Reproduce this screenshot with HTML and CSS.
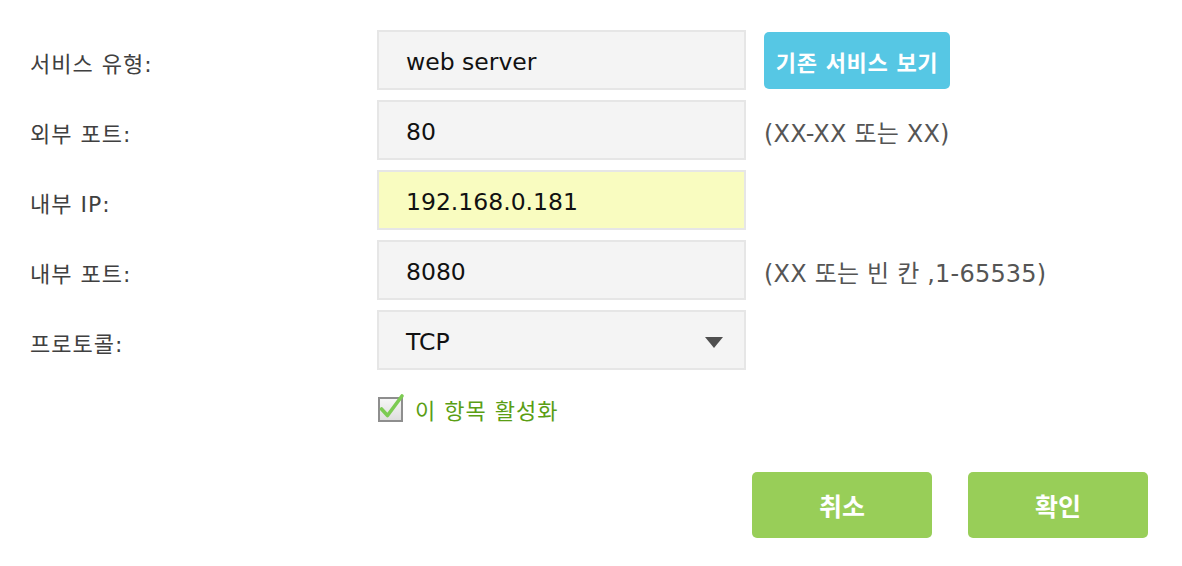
FILE: index.html
```html
<!DOCTYPE html>
<html lang="ko">
<head>
<meta charset="utf-8">
<link rel="stylesheet" href="styles.css">
</head>
<body>
<div class="form">
  <div class="row">
    <div class="label">서비스 유형:</div>
    <div class="field">web server</div>
    <button class="btn-blue">기존 서비스 보기</button>
  </div>
  <div class="row">
    <div class="label">외부 포트:</div>
    <div class="field">80</div>
    <div class="hint">(XX-XX 또는 XX)</div>
  </div>
  <div class="row">
    <div class="label">내부 IP:</div>
    <div class="field focus">192.168.0.181</div>
  </div>
  <div class="row">
    <div class="label">내부 포트:</div>
    <div class="field">8080</div>
    <div class="hint">(XX 또는 빈 칸 ,1-65535)</div>
  </div>
  <div class="row">
    <div class="label">프로토콜:</div>
    <div class="field select">TCP<span class="arrow"></span></div>
  </div>
  <div class="check-row">
    <span class="checkbox">
      <svg class="tick" width="30" height="30" viewBox="0 0 30 30"><path d="M6.5 17 L12.5 23.5 L27 4" fill="none" stroke="#7ccb52" stroke-width="3.6" stroke-linecap="round" stroke-linejoin="round"/></svg>
    </span>
    <span class="check-label">이 항목 활성화</span>
  </div>
  <div class="actions">
    <button class="btn-green">취소</button>
    <button class="btn-green">확인</button>
  </div>
</div>
</body>
</html>
```
FILE: styles.css
```css
html, body {
  margin: 0;
  padding: 0;
  background: #ffffff;
}
body {
  font-family: "DejaVu Sans", "Noto Sans CJK KR", sans-serif;
  color: #333333;
}
.form {
  padding: 30px 34px 0 30px;
  display: flex;
  flex-direction: column;
}
.row {
  display: flex;
  align-items: center;
  height: 60px;
  margin-bottom: 10px;
}
.label {
  width: 347px;
  font-size: 22px;
  letter-spacing: 1px;
  color: #404040;
  padding-top: 3px;
}
.field {
  box-sizing: border-box;
  width: 369px;
  height: 60px;
  border: 2px solid #e6e6e6;
  background: #f4f4f4;
  padding-left: 27px;
  padding-top: 3px;
  display: flex;
  align-items: center;
  font-size: 23.5px;
  color: #111111;
}
.field.focus {
  background: #f9fcc0;
  box-shadow: inset 0 0 0 1px #f9fcc0;
}
.field.select {
  position: relative;
}
.arrow {
  position: absolute;
  right: 21px;
  top: 25px;
  width: 0;
  height: 0;
  border-left: 9px solid transparent;
  border-right: 9px solid transparent;
  border-top: 11px solid #4f4f4f;
}
.btn-blue {
  margin-left: 18px;
  margin-top: 1px;
  height: 57px;
  width: 186px;
  border: none;
  border-radius: 5px;
  background: #56c7e4;
  color: #ffffff;
  font-family: "DejaVu Sans", "Noto Sans CJK KR", sans-serif;
  font-size: 22px;
  letter-spacing: 0.6px;
  font-weight: 700;
  padding: 0;
}
.hint {
  margin-left: 18px;
  padding-top: 3px;
  font-size: 24px;
  letter-spacing: 0.2px;
  color: #555555;
}
.check-row {
  margin-top: 16px;
  margin-left: 348px;
  display: flex;
  align-items: center;
  height: 26px;
}
.checkbox {
  position: relative;
  box-sizing: border-box;
  width: 25px;
  height: 25px;
  border: 2px solid #8e8e8e;
  background: linear-gradient(#f6f6f6, #dedede);
}
.tick {
  position: absolute;
  left: -5px;
  top: -7px;
}
.check-label {
  margin-left: 12px;
  font-size: 22px;
  letter-spacing: 1px;
  color: #5a9e14;
}
.actions {
  margin-top: 50px;
  display: flex;
  justify-content: flex-end;
  gap: 36px;
}
.btn-green {
  width: 180px;
  height: 66px;
  border: none;
  border-radius: 5px;
  background: #98ce58;
  color: #ffffff;
  font-family: "DejaVu Sans", "Noto Sans CJK KR", sans-serif;
  font-size: 25px;
  font-weight: 700;
  padding: 0;
}
```
